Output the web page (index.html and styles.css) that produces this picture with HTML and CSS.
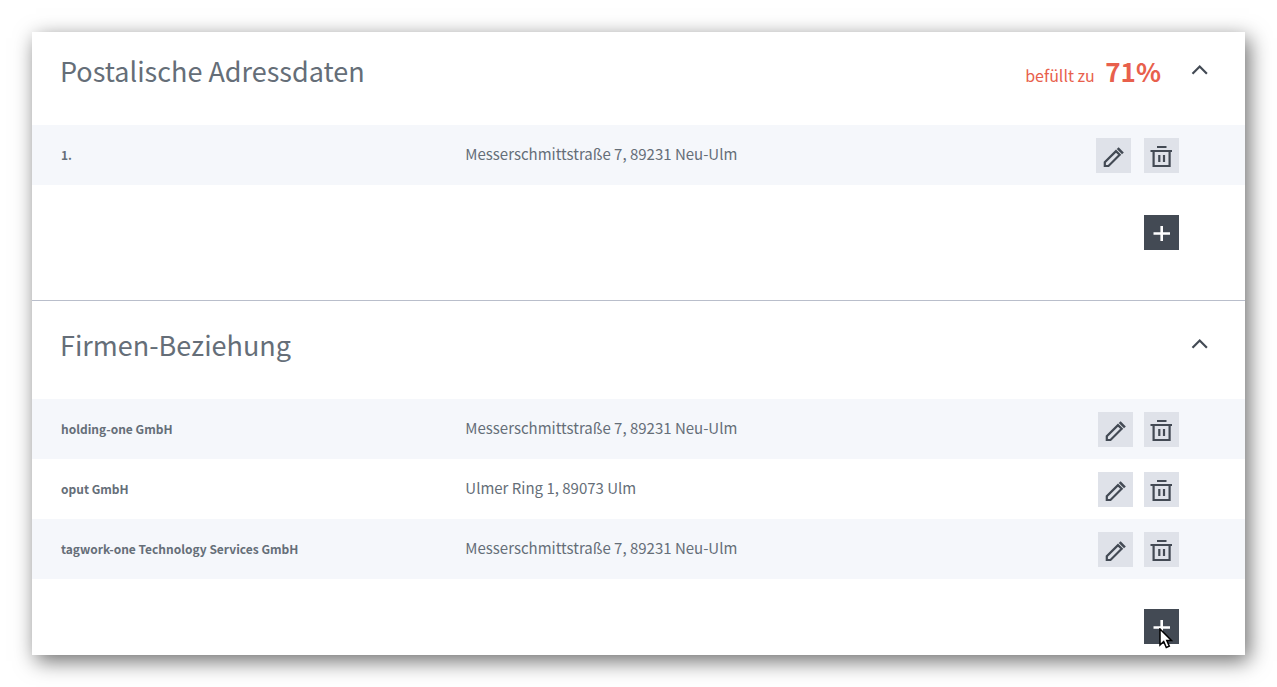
FILE: index.html
```
<!DOCTYPE html>
<html lang="de">
<head>
    <meta charset="UTF-8">
    <meta name="viewport" content="width=device-width, initial-scale=1.0">
    <title>Stammdaten</title>
    <link rel="stylesheet" href="styles.css">
</head>
<body>
    <!-- Shared icons -->
    <svg class="icon-defs" aria-hidden="true">
        <symbol id="icon-chevron" viewBox="0 0 18 12">
            <path d="M1.500 9.700l7.200-7.200 7.200 7.200" fill="none" stroke="currentColor" stroke-width="2.200"/>
        </symbol>
        <symbol id="icon-edit" viewBox="0 0 35 35">
            <path d="M8.800 28v-3.700L20 13.100l3.700 3.700L12.500 28z" fill="none" stroke="currentColor" stroke-width="2.200"/>
            <path d="M21.700 10.200l5.200 5.200" fill="none" stroke="currentColor" stroke-width="2.600"/>
        </symbol>
        <symbol id="icon-delete" viewBox="0 0 35 35">
            <path d="M13 9h9.500M6.500 13h21.500M9.600 13v15h16V13M15.300 17v7M20 17v7" fill="none" stroke="currentColor" stroke-width="2.200"/>
        </symbol>
        <symbol id="icon-add" viewBox="0 0 35 35">
            <path d="M9.500 18.500h16.500M17.700 11v15" fill="none" stroke="currentColor" stroke-width="2.600"/>
        </symbol>
    </svg>

    <main class="card">
        <section class="panel addresses">
            <header class="panel-header">
                <h2>Postalische Adressdaten</h2>
                <p class="progress">befüllt zu <strong>71%</strong></p>
                <button type="button" class="toggle" aria-label="Zuklappen"><svg><use href="#icon-chevron"/></svg></button>
            </header>
            <table>
                <tr>
                    <th scope="row">1.</th>
                    <td>Messerschmittstraße 7, 89231 Neu-Ulm</td>
                    <td>
                        <div class="actions">
                            <button type="button" class="icon-button" aria-label="Bearbeiten"><svg><use href="#icon-edit"/></svg></button>
                            <button type="button" class="icon-button" aria-label="Löschen"><svg><use href="#icon-delete"/></svg></button>
                        </div>
                    </td>
                </tr>
            </table>
            <div class="panel-footer">
                <button type="button" class="icon-button add" aria-label="Hinzufügen"><svg><use href="#icon-add"/></svg></button>
            </div>
        </section>

        <section class="panel companies">
            <header class="panel-header">
                <h2>Firmen-Beziehung</h2>
                <button type="button" class="toggle" aria-label="Zuklappen"><svg><use href="#icon-chevron"/></svg></button>
            </header>
            <table>
                <tr>
                    <th scope="row">holding-one GmbH</th>
                    <td>Messerschmittstraße 7, 89231 Neu-Ulm</td>
                    <td>
                        <div class="actions">
                            <button type="button" class="icon-button" aria-label="Bearbeiten"><svg><use href="#icon-edit"/></svg></button>
                            <button type="button" class="icon-button" aria-label="Löschen"><svg><use href="#icon-delete"/></svg></button>
                        </div>
                    </td>
                </tr>
                <tr>
                    <th scope="row">oput GmbH</th>
                    <td>Ulmer Ring 1, 89073 Ulm</td>
                    <td>
                        <div class="actions">
                            <button type="button" class="icon-button" aria-label="Bearbeiten"><svg><use href="#icon-edit"/></svg></button>
                            <button type="button" class="icon-button" aria-label="Löschen"><svg><use href="#icon-delete"/></svg></button>
                        </div>
                    </td>
                </tr>
                <tr>
                    <th scope="row">tagwork-one Technology Services GmbH</th>
                    <td>Messerschmittstraße 7, 89231 Neu-Ulm</td>
                    <td>
                        <div class="actions">
                            <button type="button" class="icon-button" aria-label="Bearbeiten"><svg><use href="#icon-edit"/></svg></button>
                            <button type="button" class="icon-button" aria-label="Löschen"><svg><use href="#icon-delete"/></svg></button>
                        </div>
                    </td>
                </tr>
            </table>
            <div class="panel-footer">
                <button type="button" class="icon-button add" aria-label="Hinzufügen"><svg><use href="#icon-add"/></svg></button>
                <svg class="cursor" viewBox="0 0 14 21" aria-hidden="true">
                    <path d="M1 1v16l3.700-3.500L7.300 19.500l3-1.300L7.800 12.500H12.500z" fill="#fff" stroke="#000" stroke-width="1.500"/>
                </svg>
            </div>
        </section>
    </main>
</body>
</html>
```

FILE: styles.css
```
* {
    margin: 0;
    padding: 0;
    box-sizing: border-box;
}

body {
    background-color: #fff;
    color: #656e78;
    font-family: "Noto Sans CJK SC", "Open Sans", sans-serif;
    font-size: 15px;
    line-height: 20px;
    padding: 32px;
}

button {
    border: none;
    cursor: pointer;
}

.icon-defs {
    display: none;
}

.card {
    background-color: #fff;
    box-shadow: 4px 6px 20px rgba(0, 0, 0, 0.58);
}

.panel + .panel {
    border-top: 1px solid #b9becb;
}

.panel-header {
    display: flex;
    align-items: baseline;
    padding: 19px 36px 34px 28px;
}

.companies .panel-header {
    padding-top: 24px;
}

.panel-header h2 {
    flex: 1;
    font-size: 27px;
    font-weight: 400;
    line-height: 40px;
}

.progress {
    color: #e8604c;
    font-size: 16px;
    line-height: 20px;
    margin-right: 30px;
}

.progress strong {
    font-size: 26px;
    font-weight: 700;
    margin-left: 7px;
}

.toggle {
    align-self: center;
    background: none;
    color: #434a54;
    height: 14px;
    padding-bottom: 2px;
    width: 18px;
}

.toggle svg,
.icon-button svg {
    display: block;
    height: 100%;
    width: 100%;
}

table {
    border-collapse: collapse;
    table-layout: fixed;
    width: 100%;
}

tr {
    height: 60px;
}

tr:nth-child(odd) {
    background-color: #f5f7fb;
}

th,
td {
    padding-left: 29px;
    text-align: left;
}

th {
    font-size: 12px;
    font-weight: 700;
}

td:nth-child(2) {
    padding-bottom: 2px;
}

.actions {
    display: flex;
    gap: 11px;
    justify-content: flex-end;
    padding-right: 66px;
}

.addresses .actions {
    gap: 13px;
}

.icon-button {
    background-color: #dfe2e9;
    color: #434a54;
    height: 35px;
    width: 35px;
}

.icon-button.add {
    background-color: #434a54;
    color: #fff;
}

.panel-footer {
    display: flex;
    justify-content: flex-end;
    padding: 30px 66px 50px;
    position: relative;
}

.companies .panel-footer {
    padding-bottom: 11px;
}

/* Mouse pointer resting on the add button */
.cursor {
    height: 21px;
    position: absolute;
    right: 72px;
    top: 49px;
    width: 14px;
}
```
